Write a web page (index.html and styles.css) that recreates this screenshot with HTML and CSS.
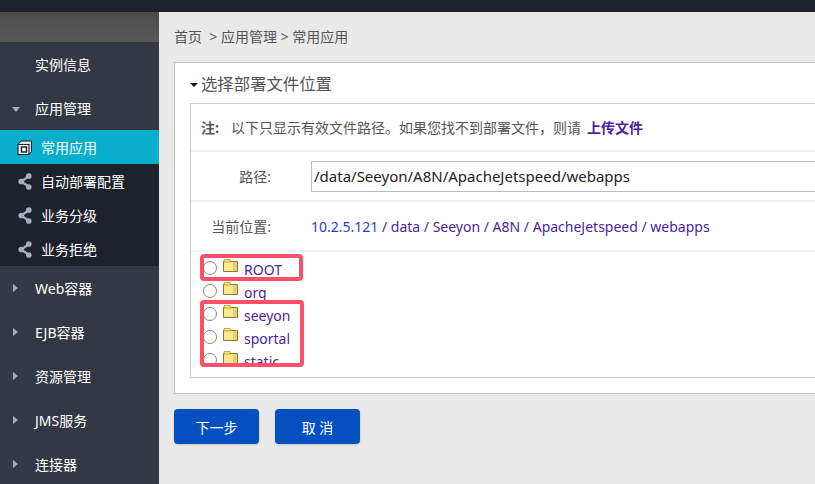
FILE: index.html
```html
<!DOCTYPE html>
<html lang="zh-CN">
<head>
  <meta charset="UTF-8">
  <link rel="stylesheet" href="styles.css">
  <title>常用应用</title>
</head>
<body>
  <svg class="defs" width="0" height="0">
    <symbol id="share" viewBox="0 0 14 18">
      <path d="M11 3.5 3 9l8 5.5" fill="none" stroke="currentColor" stroke-width="2.4"/>
      <circle cx="11" cy="3.2" r="3"/>
      <circle cx="3" cy="9" r="3"/>
      <circle cx="11" cy="14.8" r="3"/>
    </symbol>
    <symbol id="folder" viewBox="0 0 15 13">
      <path d="M.5 2.5h14v10H.5z" fill="#fbe88f" stroke="#8a7a3a"/>
      <path d="M10 3h4v9h-4z" fill="#e9cf72"/>
      <path d="M1 .5h6l1 2.5H1z" fill="#ffe94d" stroke="#8a7a3a" stroke-width=".6"/>
    </symbol>
  </svg>

  <header class="topbar"></header>

  <div class="layout">
    <aside class="sidebar">
      <div class="sidebar-head"></div>
      <nav>
        <a class="nav-item">实例信息</a>
        <a class="nav-item open">应用管理</a>
        <div class="subnav">
          <a class="sub-item active">
            <svg class="sub-icon" viewBox="0 0 16 16">
              <path d="M1 5 4 1.500h10.500V12L12 15z" fill="#dfe3ea" stroke="#1f232d"/>
              <path d="M1 5h11v10H1z" fill="#fff" stroke="#1f232d" stroke-width="1.200"/>
              <path d="M4.500 7.500h5v5h-5z" fill="none" stroke="#1f232d" stroke-width="1.500"/>
            </svg>
            常用应用
          </a>
          <a class="sub-item"><svg class="sub-icon share"><use href="#share"/></svg>自动部署配置</a>
          <a class="sub-item"><svg class="sub-icon share"><use href="#share"/></svg>业务分级</a>
          <a class="sub-item"><svg class="sub-icon share"><use href="#share"/></svg>业务拒绝</a>
        </div>
        <a class="nav-item closed">Web容器</a>
        <a class="nav-item closed">EJB容器</a>
        <a class="nav-item closed">资源管理</a>
        <a class="nav-item closed">JMS服务</a>
        <a class="nav-item closed">连接器</a>
      </nav>
    </aside>

    <main class="content">
      <p class="crumbs">首页 &nbsp;&gt; 应用管理 &gt; 常用应用</p>

      <section class="panel">
        <h3 class="panel-title">选择部署文件位置</h3>
        <div class="box">
          <div class="row note">
            <b>注:</b>
            <span>以下只显示有效文件路径。如果您找不到部署文件，则请</span>
            <a class="upload">上传文件</a>
          </div>
          <div class="row">
            <label class="row-label">路径:</label>
            <input class="path-input" type="text" value="/data/Seeyon/A8N/ApacheJetspeed/webapps">
          </div>
          <div class="row">
            <label class="row-label">当前位置:</label>
            <div class="trail"><a class="host">10.2.5.121</a> / data / Seeyon / A8N / ApacheJetspeed / webapps</div>
          </div>
          <ul class="files">
            <li><i class="radio"></i><svg class="folder"><use href="#folder"/></svg><a>ROOT</a></li>
            <li><i class="radio"></i><svg class="folder"><use href="#folder"/></svg><a>org</a></li>
            <li><i class="radio"></i><svg class="folder"><use href="#folder"/></svg><a>seeyon</a></li>
            <li><i class="radio"></i><svg class="folder"><use href="#folder"/></svg><a>sportal</a></li>
            <li><i class="radio"></i><svg class="folder"><use href="#folder"/></svg><a>static</a></li>
          </ul>
        </div>
        <div class="mark mark-one"></div>
        <div class="mark mark-two"></div>
      </section>

      <div class="actions">
        <button class="btn">下一步</button>
        <button class="btn">取 消</button>
      </div>
    </main>
  </div>
</body>
</html>
```

FILE: styles.css
```css
:root {
  --dark: #1e222c;
  --side: #343844;
  --cyan: #0aaecd;
  --line: #c8cacf;
  --line-soft: #f0f0f0;
  --text: #555;
  --link: #4b1f9e;
  --blue: #0550c0;
  --red: #fb5068;
}

* {
  margin: 0;
  padding: 0;
  box-sizing: border-box;
}

html, body {
  height: 100%;
  overflow: hidden;
}

body {
  font-family: "Noto Sans", "Noto Sans CJK SC", sans-serif;
  font-size: 14px;
  color: var(--text);
  background-color: #e9e9e9;
}

.defs {
  position: absolute;
}

.topbar {
  height: 12px;
  background-color: var(--dark);
}

.layout {
  display: flex;
  height: 472px;
}

/* sidebar */
.sidebar {
  flex: 0 0 159px;
  background-color: var(--side);
  color: #fff;
}

.sidebar-head {
  height: 30px;
  background: linear-gradient(#4c4c4c, #585858);
}

.nav-item {
  display: flex;
  align-items: center;
  height: 44px;
  padding-left: 35px;
  position: relative;
}

.nav-item.open::before {
  content: "";
  position: absolute;
  left: 12px;
  top: 21px;
  border: 4px solid transparent;
  border-top: 5px solid #a5adbd;
  border-bottom: 0;
}

.nav-item.closed::before {
  content: "";
  position: absolute;
  left: 13px;
  top: 18px;
  border: 4px solid transparent;
  border-left: 5px solid #a5adbd;
  border-right: 0;
}

.subnav {
  background-color: var(--dark);
}

.sub-item {
  display: flex;
  align-items: center;
  height: 34px;
  padding-left: 17px;
}

.sub-item.active {
  background-color: var(--cyan);
}

.sub-icon {
  width: 16px;
  height: 17px;
  margin-right: 8px;
  flex: none;
}

.sub-icon.share {
  color: #a5adbd;
  fill: currentColor;
}

/* main */
.content {
  flex: 1;
  min-width: 0;
  padding-left: 15px;
}

.crumbs {
  height: 50px;
  line-height: 50px;
  white-space: nowrap;
}

.panel {
  position: relative;
  width: 700px;
  height: 332px;
  padding: 0 15px;
  background-color: #fff;
  border: 1px solid #bfc2cb;
}

.panel-title {
  position: relative;
  height: 40px;
  padding-left: 11px;
  font-weight: 400;
  line-height: 43px;
}

.panel-title::before {
  content: "";
  position: absolute;
  left: 0;
  top: 20px;
  border: 4px solid transparent;
  border-top: 4px solid #111;
  border-bottom: 0;
}

.box {
  height: 275px;
  border: 1px solid var(--line);
}

.row {
  display: flex;
  align-items: center;
  height: 50px;
  border-bottom: 2px solid var(--line-soft);
}

.note {
  height: 48px;
  padding-left: 10px;
}

.note b {
  margin-right: 12px;
  font-weight: 700;
}

.upload {
  margin-left: 6px;
  font-weight: 700;
  color: var(--link);
}

.row-label {
  flex: 0 0 120px;
  padding-right: 40px;
  text-align: right;
  white-space: nowrap;
}

.row-label + .trail,
.row-label + .path-input {
  margin-left: 0;
}

.path-input {
  flex: none;
  width: 600px;
  height: 31px;
  padding: 0 2px;
  font: inherit;
  font-size: 15px;
  color: #222;
  border: 1px solid #b8bcc8;
  outline: none;
}

.trail {
  white-space: nowrap;
  color: var(--link);
}

.host {
  color: #2a3bd0;
}

.files {
  height: 125px;
  overflow: hidden;
  list-style: none;
  padding: 5px 0 0 12px;
}

.files li {
  display: flex;
  align-items: flex-start;
  height: 23px;
}

.files a {
  color: var(--link);
  margin-top: 3px;
  line-height: 20px;
}

.radio {
  flex: none;
  width: 14px;
  height: 14px;
  margin-top: 4px;
  border: 1px solid #888;
  border-radius: 50%;
  background-color: #fff;
}

.folder {
  flex: none;
  width: 15px;
  height: 13px;
  margin: 2px 6px 0 6px;
}

.mark {
  position: absolute;
  border: 4px solid var(--red);
  border-radius: 4px;
}

.mark-one {
  left: 25px;
  top: 191px;
  width: 103px;
  height: 27px;
}

.mark-two {
  left: 25px;
  top: 237px;
  width: 104px;
  height: 67px;
}

.actions {
  display: flex;
  gap: 16px;
  margin-top: 15px;
}

.btn {
  width: 85px;
  height: 35px;
  font: inherit;
  color: #fff;
  background-color: var(--blue);
  border: none;
  border-radius: 4px;
  box-shadow: 0 1px 2px rgba(0, 0, 0, 0.15);
}
```
